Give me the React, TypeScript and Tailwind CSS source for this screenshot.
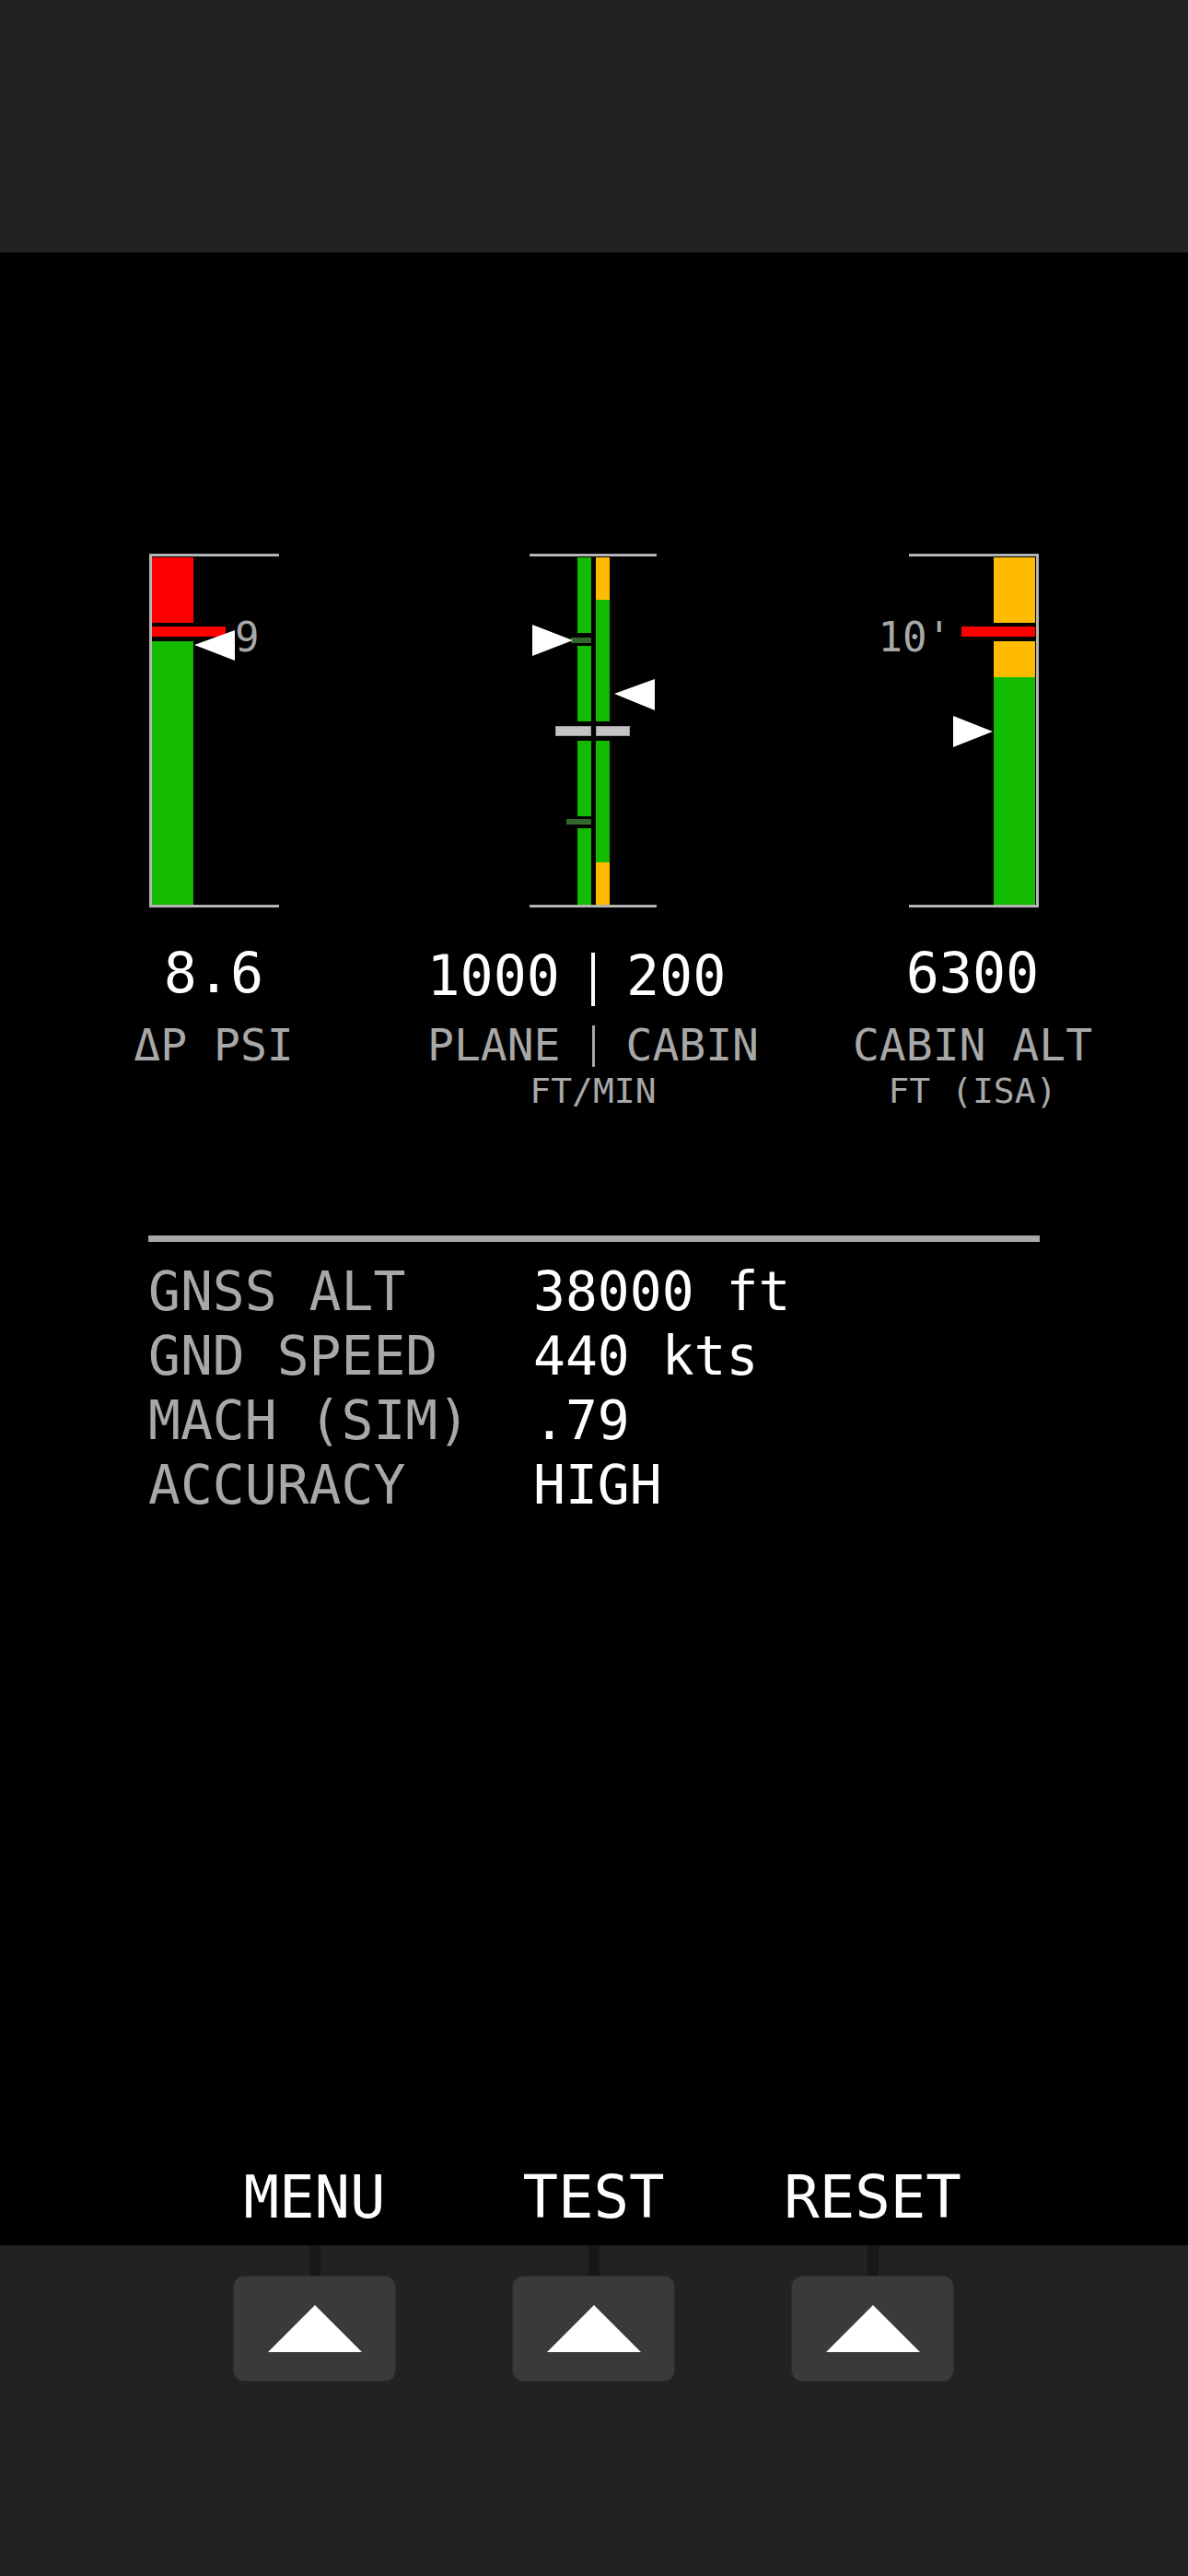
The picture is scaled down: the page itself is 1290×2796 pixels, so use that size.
import React from "react";

const GREEN = "#12bb00";
const AMBER = "#ffbb00";
const RED = "#ff0000";
const FRAME = "#b4b4b4";
const DIMTXT = "#a8a8a8";

function DeltaPGauge() {
  return (
    <svg viewBox="0 0 412 390" className="h-[390px] w-[412px]">
      <rect x="136" y="3" width="3" height="384" fill={FRAME} />
      <rect x="136" y="3" width="141" height="3" fill={FRAME} />
      <rect x="136" y="384" width="141" height="3" fill={FRAME} />
      <rect x="139" y="7" width="45" height="71" fill={RED} />
      <rect x="139" y="82" width="80" height="11" fill={RED} />
      <rect x="139" y="98" width="45" height="286" fill={GREEN} />
      <polygon points="185,102 229,86 229,119" fill="#fff" />
      <text x="229" y="109" fill={DIMTXT} fontSize="44" fontFamily="'DejaVu Sans Mono', monospace">
        9
      </text>
    </svg>
  );
}

function RateGauge() {
  return (
    <svg viewBox="0 0 412 390" className="h-[390px] w-[412px]">
      <rect x="137" y="3" width="138" height="3" fill={FRAME} />
      <rect x="137" y="384" width="138" height="3" fill={FRAME} />
      {/* plane (left) bar */}
      <rect x="189" y="7" width="15" height="82" fill={GREEN} />
      <rect x="189" y="103" width="15" height="82" fill={GREEN} />
      <rect x="189" y="206" width="15" height="82" fill={GREEN} />
      <rect x="189" y="301" width="15" height="83" fill={GREEN} />
      <rect x="182" y="94" width="22" height="6" fill="#2f6a2a" />
      <rect x="177" y="291" width="27" height="6" fill="#2f6a2a" />
      {/* cabin (right) bar */}
      <rect x="209" y="7" width="15" height="46" fill={AMBER} />
      <rect x="209" y="53" width="15" height="132" fill={GREEN} />
      <rect x="209" y="206" width="15" height="132" fill={GREEN} />
      <rect x="209" y="338" width="15" height="46" fill={AMBER} />
      {/* zero marks */}
      <rect x="165.5" y="190.5" width="38" height="10" fill="#c4c4c4" stroke="#9a9a9a" strokeWidth="1" />
      <rect x="209.5" y="190.5" width="36" height="10" fill="#c4c4c4" stroke="#9a9a9a" strokeWidth="1" />
      <polygon points="140,80 184,97 140,114" fill="#fff" />
      <polygon points="229,155 273,139 273,173" fill="#fff" />
    </svg>
  );
}

function CabinAltGauge() {
  return (
    <svg viewBox="0 0 412 390" className="h-[390px] w-[412px]">
      <rect x="275" y="3" width="3" height="384" fill={FRAME} />
      <rect x="137" y="3" width="141" height="3" fill={FRAME} />
      <rect x="137" y="384" width="141" height="3" fill={FRAME} />
      <rect x="229" y="7" width="45" height="71" fill={AMBER} />
      <rect x="194" y="82" width="80" height="11" fill={RED} />
      <rect x="229" y="98" width="45" height="39" fill={AMBER} />
      <rect x="229" y="137" width="45" height="247" fill={GREEN} />
      <polygon points="185,179 228,196 185,213" fill="#fff" />
      <text
        x="183"
        y="109"
        textAnchor="end"
        fill={DIMTXT}
        fontSize="44"
        fontFamily="'DejaVu Sans Mono', monospace"
      >
        10'
      </text>
    </svg>
  );
}

function SoftKey({ label }: { label: string }) {
  return <div className="text-center text-[64px] leading-[64px] text-white">{label}</div>;
}

function KeyButton() {
  return (
    <div className="flex flex-col items-center">
      <div className="h-[33px] w-[12px] bg-[#181818]" />
      <div className="flex h-[115px] w-[177px] items-center justify-center rounded-[12px] border border-[#2c2c2c] bg-[#3b3a3b]">
        <svg viewBox="0 0 102 51" className="h-[51px] w-[102px]">
          <polygon points="51,0 102,51 0,51" fill="#fff" />
        </svg>
      </div>
    </div>
  );
}

const rows = [
  ["GNSS ALT", "38000 ft"],
  ["GND SPEED", "440 kts"],
  ["MACH (SIM)", ".79"],
  ["ACCURACY", "HIGH"],
];

export default function App() {
  return (
    <div className="flex h-[2796px] w-[1290px] flex-col bg-black font-['DejaVu_Sans_Mono',monospace]">
      <div className="h-[274px] bg-[#222222]" />

      <div className="flex h-[2163px] flex-col bg-black pt-[324px] pb-[20px]">
        {/* gauges */}
        <div className="ml-[26px] grid w-[1236px] grid-cols-3">
          <DeltaPGauge />
          <RateGauge />
          <CabinAltGauge />
        </div>

        {/* readouts */}
        <div className="ml-[26px] mt-[38px] grid w-[1236px] grid-cols-3 text-[60px] leading-[60px] text-white">
          <div className="text-center">8.6</div>
          <div className="grid grid-cols-[1fr_auto_1fr] items-center">
            <span className="justify-self-end">1000</span>
            <span className="mx-[34px] mt-[8px] h-[58px] w-[4px] bg-white" />
            <span className="justify-self-start">200</span>
          </div>
          <div className="text-center">6300</div>
        </div>

        <div className="ml-[26px] mt-[18px] grid w-[1236px] grid-cols-3 text-[48px] leading-[48px] text-[#a8a8a8]">
          <div className="text-center">ΔP PSI</div>
          <div className="grid grid-cols-[1fr_auto_1fr] items-center">
            <span className="justify-self-end">PLANE</span>
            <span className="mx-[34px] mt-[2px] h-[45px] w-[3px] bg-[#a8a8a8]" />
            <span className="justify-self-start">CABIN</span>
          </div>
          <div className="text-center">CABIN ALT</div>
        </div>

        <div className="ml-[26px] mt-[7px] grid w-[1236px] grid-cols-3 text-[38px] leading-[38px] text-[#a8a8a8]">
          <div />
          <div className="text-center">FT/MIN</div>
          <div className="text-center">FT (ISA)</div>
        </div>

        {/* GNSS data */}
        <div className="ml-[161px] mt-[138px] w-[968px]">
          <div className="h-[7px] bg-[#a8a8a8]" />
          <div className="mt-[19px] text-[58px] leading-[70px]">
            {rows.map(([k, v]) => (
              <div key={k} className="flex">
                <span className="w-[418px] text-[#a8a8a8]">{k}</span>
                <span className="text-white">{v}</span>
              </div>
            ))}
          </div>
        </div>

        {/* soft key labels */}
        <div className="ml-[190px] mt-auto grid w-[909px] grid-cols-3">
          <SoftKey label="MENU" />
          <SoftKey label="TEST" />
          <SoftKey label="RESET" />
        </div>
      </div>

      <div className="flex-1 bg-[#222222]">
        <div className="ml-[190px] grid w-[909px] grid-cols-3">
          <KeyButton />
          <KeyButton />
          <KeyButton />
        </div>
      </div>
    </div>
  );
}
